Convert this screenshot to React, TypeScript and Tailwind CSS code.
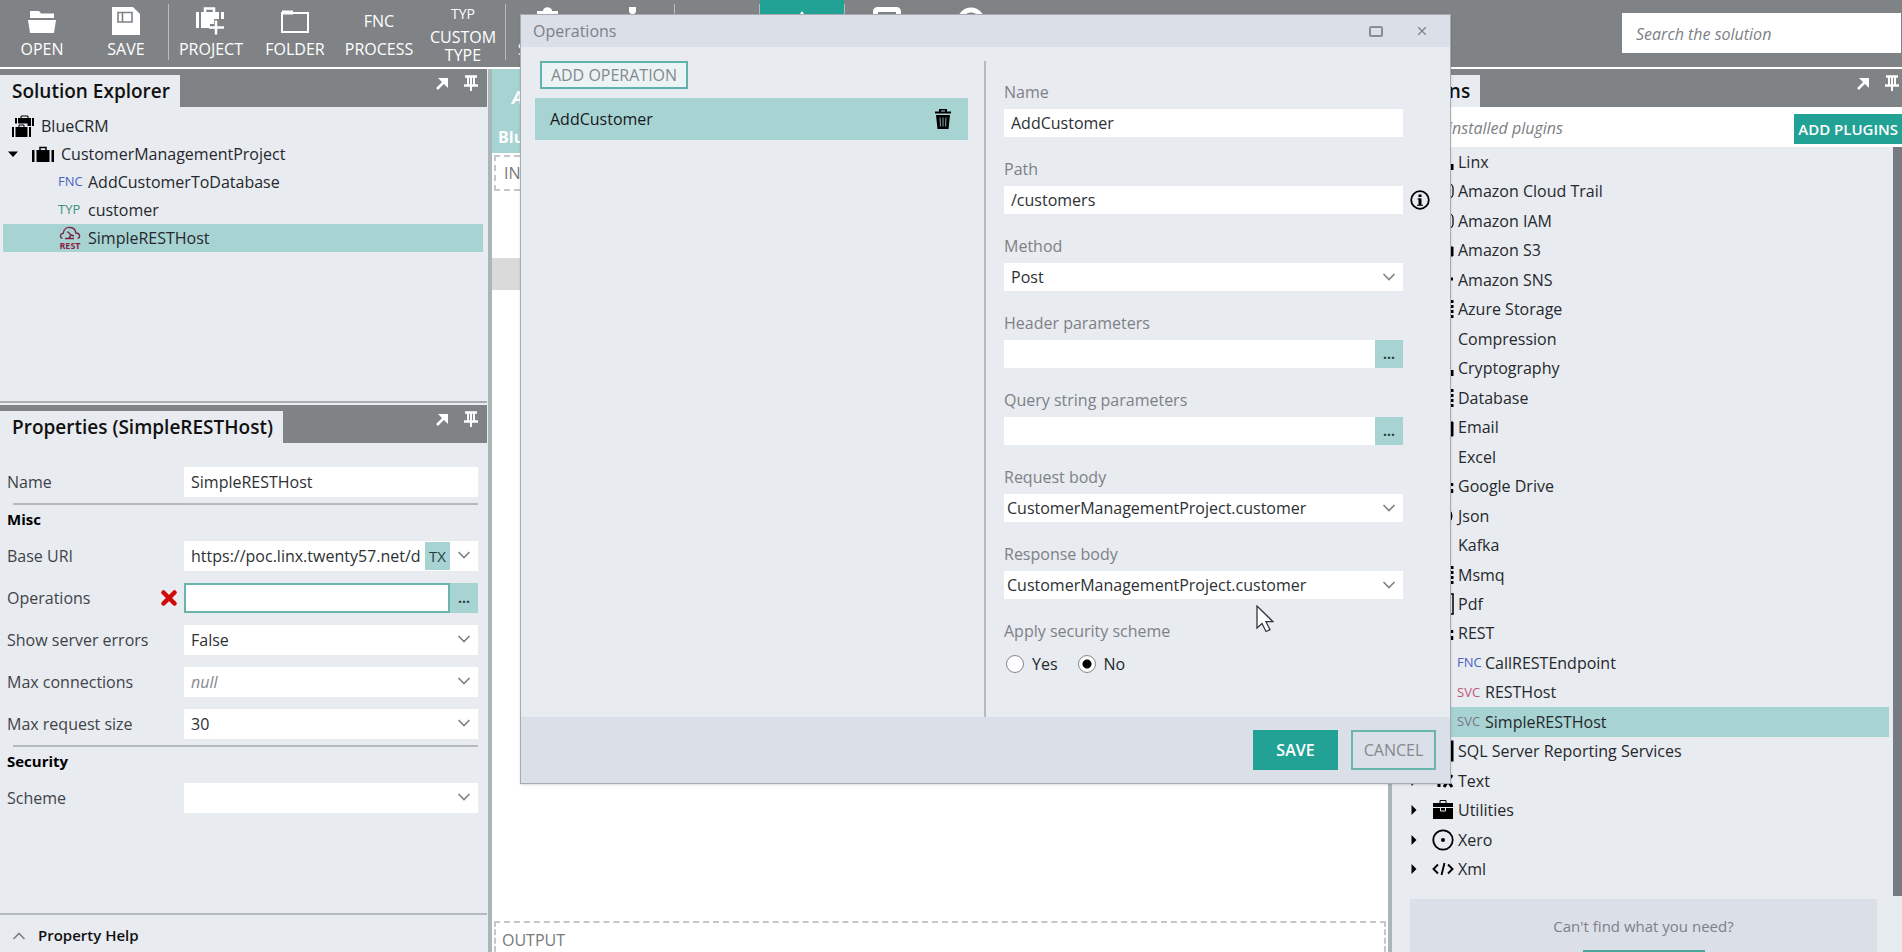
import { useState } from "react";
import type { ReactNode } from "react";
import { clsx } from "clsx";
import { X } from "lucide-react";

const solutionRows = [
  { tag: "FNC", tagClass: "text-[#4a63c0]", label: "AddCustomerToDatabase" },
  { tag: "TYP", tagClass: "text-[#3f8f7f]", label: "customer" },
  { tag: "REST", tagClass: "", label: "SimpleRESTHost" },
];

const plugins = [
  { icon: "linx", label: "Linx" },
  { icon: "box", label: "Amazon Cloud Trail" },
  { icon: "box", label: "Amazon IAM" },
  { icon: "bucket", label: "Amazon S3" },
  { icon: "dot", label: "Amazon SNS" },
  { icon: "grid", label: "Azure Storage" },
  { icon: "none", label: "Compression" },
  { icon: "linx", label: "Cryptography" },
  { icon: "grid", label: "Database" },
  { icon: "mail", label: "Email" },
  { icon: "none", label: "Excel" },
  { icon: "nodes", label: "Google Drive" },
  { icon: "disc", label: "Json" },
  { icon: "none", label: "Kafka" },
  { icon: "grid", label: "Msmq" },
  { icon: "page", label: "Pdf" },
  { icon: "nodes", label: "REST" },
  { tag: "FNC", tagClass: "text-[#4a63c0]", label: "CallRESTEndpoint" },
  { tag: "SVC", tagClass: "text-[#c0587a]", label: "RESTHost" },
  { tag: "SVC", tagClass: "text-[#7f7387]", label: "SimpleRESTHost", selected: true },
  { icon: "report", label: "SQL Server Reporting Services" },
  { icon: "text", label: "Text" },
  { icon: "toolbox", label: "Utilities" },
  { icon: "target", label: "Xero" },
  { icon: "code", label: "Xml" },
];

function Caret({ down }: { down?: boolean }) {
  return (
    <svg viewBox="0 0 12 12" className="size-3 shrink-0">
      <path d={down ? "M1 3.5h10L6 9z" : "M3.5 1v10L8.5 6z"} fill="#000" />
    </svg>
  );
}

function Chevron() {
  return (
    <svg viewBox="0 0 14 8" className="h-2 w-3.5" fill="none" stroke="#7d8085" strokeWidth="1.6">
      <path d="M1.5 1L7 6.500 12.500 1" />
    </svg>
  );
}

function Suitcase({ className }: { className?: string }) {
  return (
    <svg viewBox="0 0 22 17" className={className} fill="currentColor">
      <path d="M0 4h2.500v12H0zM19.500 4H22v12h-2.500zM4.500 4h13v12h-13z" />
      <path d="M8 4V1.500h6V4" fill="none" stroke="currentColor" strokeWidth="1.5" />
    </svg>
  );
}

function SolutionIcon() {
  return (
    <svg viewBox="0 0 24 24" className="size-6 shrink-0">
      <path d="M4 4h2v8H4zM21 4h2v8h-2zM7 4h13v8H7z" />
      <path d="M10 4V2h7v2" fill="none" stroke="#000" />
      <path d="M4 13.500V11h11v2.500" fill="none" stroke="#e8ebf0" strokeWidth="3" />
      <path d="M1 13h2v10H1zM18 13h2v10h-2zM4.500 13h12v10h-12z" />
      <path d="M8 13v-2h5v2" fill="none" stroke="#000" />
    </svg>
  );
}

function RestIcon() {
  return (
    <svg viewBox="0 0 24 24" className="size-6 shrink-0" fill="none" stroke="#7b2442">
      <path
        d="M4.500 12.500c-3-1-2.500-5 .7-5.200C6 2.500 9.500 1 12.500 1.500c3 .3 5 2.500 5.300 5.500 4.200 0 5.200 4.500 1.700 5.500"
        strokeWidth="1.300"
      />
      <path d="M10 6l3 3-2 3M13 9l3 1M9.500 5.500v1M7 12.500h9" strokeWidth="1.400" />
      <text x="12" y="22.500" fontSize="9" fontWeight="700" textAnchor="middle" fill="#8c1f43" stroke="none">
        REST
      </text>
    </svg>
  );
}

function PluginIcon({ name }: { name: string }) {
  return (
    <svg viewBox="0 0 22 22" className="size-[22px] shrink-0" fill="none" stroke="#000">
      {name === "linx" && <path d="M3 4v13M8 17.500h13M20 13v6" strokeWidth="3" />}
      {name === "box" && <rect x="2" y="4" width="19" height="14" rx="4" strokeWidth="1.200" />}
      {name === "bucket" && <path d="M3 8h18v9H3z" fill="#000" />}
      {name === "dot" && <path d="M13 10h8" strokeWidth="3" />}
      {name === "grid" && <path d="M4 2v19M12 2v19M20 2v19" strokeWidth="3" strokeDasharray="3 2" />}
      {name === "mail" && <path d="M2 6h19v14H2z" fill="#000" />}
      {name === "nodes" && <path d="M5 5v12M20 8v3M20 14v4" strokeWidth="2.500" />}
      {name === "disc" && <circle cx="11" cy="11" r="9" fill="#000" />}
      {name === "page" && <path d="M4 1h17v20H4z" strokeWidth="1.500" />}
      {name === "report" && <path d="M4 2h16v18H4z" strokeWidth="3" />}
      {name === "text" && <path d="M3 5h8M7 5v12M12 5l8 12M20 5l-8 12" strokeWidth="3" />}
      {name === "toolbox" && (
        <>
          <path d="M1 4h20v4H1zM1 9h20v11H1z" fill="#000" stroke="none" />
          <path d="M8 4V1.500h6V4" />
          <path d="M8.500 8.500v3.500h5V8.500" stroke="#e8ebf0" />
        </>
      )}
      {name === "target" && (
        <>
          <circle cx="11" cy="11" r="9.700" strokeWidth="1.800" />
          <circle cx="11" cy="11" r="2" fill="#000" stroke="none" />
        </>
      )}
      {name === "code" && (
        <path d="M6 6.500L1.500 11 6 15.500M16 6.500l4.500 4.500-4.500 4.500M12.500 5l-3 12" strokeWidth="1.900" />
      )}
    </svg>
  );
}

function ToolButton({ children, label, teal }: { children?: ReactNode; label?: string; teal?: boolean }) {
  return (
    <button
      type="button"
      className={clsx("flex h-full w-[84px] shrink-0 flex-col items-center", teal && "bg-[#22a294]")}
    >
      <span className="flex h-[38px] items-center justify-center pt-1">{children}</span>
      {label && <span className="leading-[22px]">{label}</span>}
    </button>
  );
}

function Separator() {
  return <div className="mt-1 h-14 w-px shrink-0 bg-[#b9bbbd]" />;
}

function Toolbar() {
  return (
    <header className="flex h-[69px] shrink-0 overflow-hidden border-b-2 border-white bg-[#808386] text-white">
      <ToolButton label="OPEN">
        <svg viewBox="0 0 28 23" className="h-[23px] w-7" fill="#fff">
          <path d="M2 8V1h9l2 2.500h13V8zM0 10h28l-2 13H2z" />
        </svg>
      </ToolButton>
      <ToolButton label="SAVE">
        <svg viewBox="0 0 28 28" className="size-7">
          <path d="M0 0h21l7 7v21H0z" fill="#fff" />
          <path d="M6 5.500h14v9.500H6zM10.500 6v8.500" fill="none" stroke="#808386" strokeWidth="1.600" />
        </svg>
      </ToolButton>
      <Separator />
      <ToolButton label="PROJECT">
        <svg viewBox="0 0 30 28" className="h-7 w-[30px]" fill="#fff">
          <path d="M0 5h3v16H0zM5 5h18v7h-5v5h-4v4H5zM25 5h3v7h-3z" />
          <path d="M9 5V1.500h9V5M20 13.500v14M13 20.500h15" fill="none" stroke="#fff" strokeWidth="2.500" />
        </svg>
      </ToolButton>
      <ToolButton label="FOLDER">
        <svg viewBox="0 0 28 23" className="h-[23px] w-7" fill="none" stroke="#fff">
          <path d="M1 22V3h26v19z" strokeWidth="2" />
          <path d="M1 2.500h11" strokeWidth="4" />
        </svg>
      </ToolButton>
      <ToolButton label="PROCESS">
        <span className="leading-5">FNC</span>
      </ToolButton>
      <button type="button" className="flex w-[84px] shrink-0 flex-col items-center pt-1">
        <span className="text-sm leading-5">TYP</span>
        <span className="pt-1 leading-[18px]">
          CUSTOM
          <br />
          TYPE
        </span>
      </button>
      <Separator />
      <ToolButton label="SERVICE">
        <svg viewBox="0 0 28 28" className="size-7" fill="#fff">
          <path d="M3 4h6c0-5 9-5 9 0h6v20H3z" />
        </svg>
      </ToolButton>
      <ToolButton>
        <svg viewBox="0 0 28 28" className="size-7" fill="#fff">
          <path d="M11 0h7v5l-3.500 4L11 5z" />
        </svg>
      </ToolButton>
      <Separator />
      <ToolButton />
      <Separator />
      <ToolButton teal>
        <svg viewBox="0 0 28 28" className="size-7" fill="#fff">
          <path d="M14 4l10 14H4z" />
        </svg>
      </ToolButton>
      <Separator />
      <ToolButton>
        <svg viewBox="0 0 28 28" className="size-7" fill="none" stroke="#fff" strokeWidth="5">
          <rect x="2.500" y="2.500" width="23" height="22" rx="2" />
        </svg>
      </ToolButton>
      <ToolButton>
        <svg viewBox="0 0 28 28" className="size-7" fill="none" stroke="#fff" strokeWidth="5">
          <circle cx="14" cy="14" r="11" />
        </svg>
      </ToolButton>
      <input
        type="search"
        aria-label="Search the solution"
        placeholder="Search the solution"
        className="mt-[13px] mr-px ml-auto h-10 w-[279px] bg-white px-3.5 pt-0.5 text-[#333] italic outline-none placeholder:text-[#7d8085]"
      />
    </header>
  );
}

function PanelHeader({ title, buttonsClass = "pr-2" }: { title: string; buttonsClass?: string }) {
  return (
    <div className="flex h-[38px] shrink-0 items-end justify-between bg-[#808386]">
      <h2 className="flex h-8 items-center bg-[#e8ebf0] pr-2.5 pl-3 text-[19px] font-semibold text-[#111]">{title}</h2>
      <div className={clsx("flex gap-[13px] self-start pt-1.5 text-white", buttonsClass)}>
        <button type="button" aria-label="Float" className="size-4">
          <svg viewBox="0 0 16 16" fill="none" stroke="#fff" strokeWidth="2.500">
            <path d="M3 14l9-9" />
            <path d="M4 3h10v10z" fill="#fff" stroke="none" />
          </svg>
        </button>
        <button type="button" aria-label="Pin" className="size-4">
          <svg viewBox="0 0 16 16" fill="none" stroke="#fff">
            <path d="M2 1.500h12M1 10.500h14" strokeWidth="2.500" />
            <path d="M5 2v8M8 2v14M11 2v8" strokeWidth="2" />
          </svg>
        </button>
      </div>
    </div>
  );
}

function SolutionExplorer() {
  return (
    <section className="h-[334px] shrink-0 border-b-2 border-[#a9adb1]">
      <PanelHeader title="Solution Explorer" />
      <ul className="pt-[5px] pr-1 pl-[3px] text-[#25282c]">
        <li className="flex h-7 items-center gap-1.5 pl-2">
          <SolutionIcon />
          BlueCRM
        </li>
        <li className="flex h-7 items-center pl-1">
          <Caret down />
          <Suitcase className="mr-[7px] ml-[13px] h-[17px] w-[22px] text-black" />
          CustomerManagementProject
        </li>
        {solutionRows.map((row) => (
          <li
            key={row.label}
            className={clsx("flex h-7 items-center pl-[55px]", row.tag === "REST" && "bg-[#a8d3d3]")}
          >
            <span className="flex w-[30px] items-center">
              {row.tag === "REST" ? (
                <RestIcon />
              ) : (
                <span className={clsx("text-[13px]", row.tagClass)}>{row.tag}</span>
              )}
            </span>
            {row.label}
          </li>
        ))}
      </ul>
    </section>
  );
}

function PropertyRow({ id, label, error, children }: { id: string; label: string; error?: boolean; children: ReactNode }) {
  return (
    <div className="flex h-[42px] items-center">
      <label htmlFor={id} className="w-[151px] text-[#3f4348]">
        {label}
      </label>
      {error ? <X className="mr-1 size-[22px] text-[#cf0a0a]" strokeWidth={5} /> : <span className="w-[26px]" />}
      <div className="relative flex h-[30px] flex-1 bg-white">{children}</div>
    </div>
  );
}

function PropertyGroup({ title }: { title: string }) {
  return (
    <>
      <div className="ml-1.5 border-t-2 border-[#b4b9bd]" />
      <h3 className="h-[30px] text-[15px] leading-7 font-bold text-black">{title}</h3>
    </>
  );
}

const fieldClass = "h-full w-full min-w-0 appearance-none bg-transparent pl-[7px] text-[#2d3135] outline-none";

function SelectField({ id, value, className }: { id: string; value: string; className?: string }) {
  return (
    <>
      <select id={id} defaultValue={value} className={clsx(fieldClass, className)}>
        <option>{value}</option>
      </select>
      <span className="pointer-events-none absolute top-2.5 right-[7px]">
        <Chevron />
      </span>
    </>
  );
}

function Properties() {
  return (
    <section className="mt-0.5 flex min-h-0 flex-1 flex-col">
      <PanelHeader title="Properties (SimpleRESTHost)" />
      <div className="flex-1 pt-[18px] pr-[9px] pl-[7px]">
        <PropertyRow id="prop-name" label="Name">
          <input id="prop-name" defaultValue="SimpleRESTHost" className={fieldClass} />
        </PropertyRow>
        <PropertyGroup title="Misc" />
        <PropertyRow id="prop-uri" label="Base URI">
          <input id="prop-uri" defaultValue="https://poc.linx.twenty57.net/d" className={fieldClass} />
          <button type="button" className="my-px w-[25px] shrink-0 bg-[#a8d3d3] text-[15px] text-[#25403f]">
            TX
          </button>
          <button type="button" aria-label="Show options" className="flex w-7 shrink-0 justify-center pt-2.5">
            <Chevron />
          </button>
        </PropertyRow>
        <PropertyRow id="prop-ops" label="Operations" error>
          <input id="prop-ops" className={clsx(fieldClass, "border-2 border-[#6bb5ae]")} />
          <button type="button" className="w-7 shrink-0 bg-[#a8d3d3] text-sm font-bold text-[#25403f]">
            ...
          </button>
        </PropertyRow>
        <PropertyRow id="prop-errors" label="Show server errors">
          <SelectField id="prop-errors" value="False" />
        </PropertyRow>
        <PropertyRow id="prop-conn" label="Max connections">
          <SelectField id="prop-conn" value="null" className="text-[#86898d] italic" />
        </PropertyRow>
        <PropertyRow id="prop-size" label="Max request size">
          <SelectField id="prop-size" value="30" />
        </PropertyRow>
        <PropertyGroup title="Security" />
        <PropertyRow id="prop-scheme" label="Scheme">
          <SelectField id="prop-scheme" value="" />
        </PropertyRow>
      </div>
      <button
        type="button"
        className="flex h-[39px] shrink-0 items-center gap-3 border-t-2 border-[#b4b9bd] pt-1 pl-3 text-[15px] font-semibold text-[#111]"
      >
        <span className="rotate-180">
          <Chevron />
        </span>
        Property Help
      </button>
    </section>
  );
}

function Canvas() {
  return (
    <main className="flex min-w-0 flex-1 flex-col overflow-hidden border-x-4 border-[#a9b6b8] bg-white">
      <div className="flex h-[84px] shrink-0 flex-col justify-between bg-[#a8d3d3] pt-3.5 pb-1 pl-1.5 font-bold text-white">
        <span className="pl-3.5 text-lg italic">AddCustomerToDatabase</span>
        <span>BlueCRM</span>
      </div>
      <div className="m-0.5 flex h-9 items-center border-2 border-dashed border-[#c4c6c8] pl-2 text-base text-[#77797c]">
        INPUT
      </div>
      <div className="mt-[65px] h-8 bg-[#dadada]" />
      <div className="mx-0.5 mt-auto flex h-[31px] items-center border-2 border-b-0 border-dashed border-[#c4c6c8] pt-1 pl-1.5 text-[#77797c]">
        OUTPUT
      </div>
    </main>
  );
}

function Plugins() {
  return (
    <aside className="flex w-[510px] shrink-0 flex-col bg-[#e8ebf0]">
      <PanelHeader title="Plugins" buttonsClass="pr-0.5" />
      <div className="flex h-10 shrink-0 items-center bg-white pt-1">
        <input
          type="search"
          aria-label="Search installed plugins"
          placeholder="Search installed plugins"
          className="h-full min-w-0 flex-1 pb-0.5 pl-1 text-[#333] italic outline-none placeholder:text-[#7d8085]"
        />
        <button type="button" className="h-[30px] bg-[#22a294] px-1 text-[15px] font-semibold text-white">
          ADD PLUGINS
        </button>
      </div>
      <div className="flex min-h-0 flex-1">
        <div className="flex flex-1 flex-col pr-1">
          <ul className="flex flex-1 flex-col text-[#25282c]">
            {plugins.map((plugin) => (
              <li
                key={plugin.label}
                className={clsx("flex flex-1 items-center", plugin.selected && "bg-[#a8d3d3]")}
              >
                {plugin.tag ? (
                  <span className={clsx("ml-[65px] w-7 text-[13px]", plugin.tagClass)}>{plugin.tag}</span>
                ) : (
                  <span className="flex w-[66px] items-center justify-between pr-1 pl-4">
                    <Caret />
                    <PluginIcon name={plugin.icon ?? "none"} />
                  </span>
                )}
                {plugin.label}
              </li>
            ))}
          </ul>
          <div className="mt-[15px] mr-3 ml-[18px] flex h-[53px] flex-col items-center justify-between bg-[#dbdfe7] pt-4 text-[15px] text-[#7d8187]">
            Can't find what you need?
            <div className="h-0.5 w-[122px] bg-[#4aa89d]" />
          </div>
        </div>
        <div className="mb-14 w-[9px] bg-[#777a80]" />
      </div>
    </aside>
  );
}

function DialogField({ id, label, children, extra }: { id: string; label: string; children: ReactNode; extra?: ReactNode }) {
  return (
    <div className="h-[77px]">
      <label htmlFor={id} className="block h-[30px] leading-[26px] text-[#7d8187]">
        {label}
      </label>
      <div className="flex items-center gap-[7px]">
        <div className="relative flex h-7 w-[399px] bg-white">{children}</div>
        {extra}
      </div>
    </div>
  );
}

const moreButton = (
  <button type="button" className="w-7 shrink-0 bg-[#a8d3d3] text-sm font-bold text-[#25403f]">
    ...
  </button>
);

function OperationsDialog() {
  const [secure, setSecure] = useState("No");

  return (
    <div
      role="dialog"
      aria-label="Operations"
      className="absolute top-[14px] left-[520px] flex w-[931px] flex-col border border-[#a6aab0] bg-[#e8ebf0] shadow-sm"
    >
      <div className="flex h-8 items-center bg-[#dbdfe7] pr-[21px] pl-3 text-[#7d8187]">
        Operations
        <button
          type="button"
          aria-label="Maximize"
          className="mr-8 ml-auto h-[11px] w-[14px] rounded-xs border-2 border-[#8b8f95]"
        />
        <button type="button" aria-label="Close">
          <X className="size-3.5" />
        </button>
      </div>
      <div className="flex pt-3.5 pl-3.5">
        <div className="w-[433px]">
          <button
            type="button"
            className="ml-[5px] h-7 w-[148px] border-2 border-[#5fb3aa] bg-[#ecf3f4] text-[#85898e]"
          >
            ADD OPERATION
          </button>
          <div className="mt-[9px] flex h-[42px] items-center justify-between bg-[#a8d3d3] pr-[17px] pl-[15px] text-[#16191b]">
            AddCustomer
            <button type="button" aria-label="Delete">
              <svg viewBox="0 0 16 20" className="h-5 w-4" fill="none" stroke="#000">
                <path d="M0 3.500h16M5 2.500v-2h6v2" strokeWidth="2" />
                <path d="M1 6h14l-1.500 14h-11z" fill="#000" stroke="none" />
                <path d="M5 8.500l.5 9M8 8.500v9M11 8.500l-.5 9" stroke="#a8d3d3" strokeWidth=".8" />
              </svg>
            </button>
          </div>
        </div>
        <div className="ml-4 h-[656px] border-l-2 border-[#b6babf] pt-[18px] pl-[18px]">
          <DialogField id="op-name" label="Name">
            <input id="op-name" defaultValue="AddCustomer" className={fieldClass} />
          </DialogField>
          <DialogField
            id="op-path"
            label="Path"
            extra={
              <svg viewBox="0 0 20 20" className="size-5" fill="none" stroke="#000">
                <circle cx="10" cy="10" r="8.800" strokeWidth="1.800" />
                <path d="M10 4.500v2.500M10 8.500v6.500" strokeWidth="3" />
                <path d="M7.500 9h3M7 15.300h6" />
              </svg>
            }
          >
            <input id="op-path" defaultValue="/customers" className={fieldClass} />
          </DialogField>
          <DialogField id="op-method" label="Method">
            <SelectField id="op-method" value="Post" />
          </DialogField>
          <DialogField id="op-header" label="Header parameters">
            <input id="op-header" className={fieldClass} />
            {moreButton}
          </DialogField>
          <DialogField id="op-query" label="Query string parameters">
            <input id="op-query" className={fieldClass} />
            {moreButton}
          </DialogField>
          <DialogField id="op-request" label="Request body">
            <SelectField id="op-request" value="CustomerManagementProject.customer" className="-ml-1" />
          </DialogField>
          <DialogField id="op-response" label="Response body">
            <SelectField id="op-response" value="CustomerManagementProject.customer" className="-ml-1" />
          </DialogField>
          <fieldset>
            <legend className="leading-[26px] text-[#7d8187]">Apply security scheme</legend>
            <div className="flex gap-5 pt-2 pl-0.5 text-[#25282c]">
              {["Yes", "No"].map((option) => (
                <label key={option} className="flex items-center gap-2">
                  <input
                    type="radio"
                    name="secure"
                    checked={secure === option}
                    onChange={() => setSecure(option)}
                    className="size-[18px] appearance-none rounded-full border border-[#85888c] bg-white bg-clip-padding checked:bg-[radial-gradient(circle,#000_4px,#fff_5px)]"
                  />
                  {option}
                </label>
              ))}
            </div>
          </fieldset>
        </div>
      </div>
      <div className="flex h-[66px] items-center justify-end gap-[13px] bg-[#dbdfe7] pr-3.5">
        <button type="button" className="h-10 w-[85px] bg-[#22a294] font-semibold text-white">
          SAVE
        </button>
        <button type="button" className="h-10 w-[85px] border-2 border-[#6bb5ae] text-[#85898e]">
          CANCEL
        </button>
      </div>
      <svg viewBox="0 0 18 28" className="pointer-events-none absolute top-[590px] left-[735px] h-7 w-[18px]">
        <path d="M1 1v22l5-4.500 4 8 4-1.800-4-8h7z" fill="#fff" stroke="#33373b" strokeWidth="1.300" />
      </svg>
    </div>
  );
}

export default function App() {
  return (
    <div className="relative flex h-screen flex-col overflow-hidden bg-[#e8ebf0] font-['Open_Sans','Noto_Sans',sans-serif] text-base">
      <Toolbar />
      <div className="flex min-h-0 flex-1">
        <div className="flex w-[488px] shrink-0 flex-col pr-px">
          <SolutionExplorer />
          <Properties />
        </div>
        <Canvas />
        <Plugins />
      </div>
      <OperationsDialog />
    </div>
  );
}
